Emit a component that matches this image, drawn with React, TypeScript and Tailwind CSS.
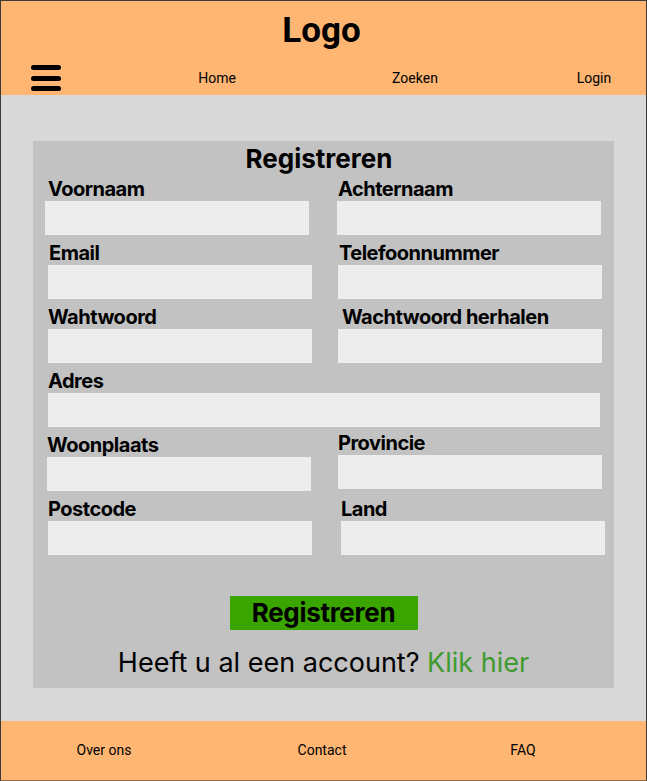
const fields: { label: string; span?: boolean; labelCls?: string; inputCls?: string }[] = [
    { label: "Voornaam", inputCls: "-ml-[3px]" },
    { label: "Achternaam", inputCls: "-ml-[1px]" },
    { label: "Email", labelCls: "ml-[1px]" },
    { label: "Telefoonnummer", labelCls: "ml-[1px]" },
    { label: "Wahtwoord" },
    { label: "Wachtwoord herhalen", labelCls: "ml-[4px]" },
    { label: "Adres", span: true },
    { label: "Woonplaats", labelCls: "-ml-[1px]", inputCls: "-ml-[1px]" },
    { label: "Provincie", labelCls: "-mt-[2px]", inputCls: "-mb-[2px]" },
    { label: "Postcode" },
    { label: "Land", labelCls: "ml-[3px]", inputCls: "ml-[3px]" },
];

function Field({ label, span, labelCls, inputCls }: { label: string; span?: boolean; labelCls?: string; inputCls?: string }) {
    return (
        <div className={span ? "col-span-2 flex flex-col" : "flex flex-col"}>
            <label className={"h-[20px] text-[20px] leading-[20px] font-bold tracking-[-0.5px] text-black " + (labelCls || "")}>{label}</label>
            <input
                type="text"
                className={"mt-[2px] h-[34px] bg-[#EDEDED] outline-none " + (span ? "w-[552px] " : "w-[264px] ") + (inputCls || "")}
            />
        </div>
    );
}

export default function App() {
    return (
        <div className="flex h-[781px] w-[647px] flex-col border border-[#3a3a3a] border-b-[#8f6c4a] font-['Inter',sans-serif]">
            {/* Header */}
            <header className="flex h-[94px] flex-col bg-[#FFB672]">
                <h1 className="mt-[10px] pr-[4px] text-center font-['Roboto',sans-serif] text-[35px] leading-[40px] font-bold text-black">Logo</h1>
                <nav className="mt-[14px] flex h-[26px] items-center font-['Roboto',sans-serif] text-[14px] text-black">
                    <button className="ml-[30px] flex h-[26px] w-[30px] flex-col justify-between">
                        <span className="h-[5px] w-full rounded-full bg-black" />
                        <span className="h-[5px] w-full rounded-full bg-black" />
                        <span className="h-[5px] w-full rounded-full bg-black" />
                    </button>
                    <a className="ml-[106px] w-[100px] text-center">Home</a>
                    <a className="ml-[98px] w-[100px] text-center">Zoeken</a>
                    <a className="ml-[79px] w-[100px] text-center">Login</a>
                </nav>
            </header>

            {/* Main */}
            <main className="h-[626px] bg-[#D9D9D9] pt-[46px] pl-[32px]">
                <div className="flex h-[547px] w-[581px] flex-col bg-[#C2C2C2] pt-[3px]">
                    <h2 className="pr-[9px] text-center text-[26px] leading-[30px] font-bold text-black">Registreren</h2>
                    <div className="mt-[5px] grid grid-cols-[264px_264px] gap-x-[26px] gap-y-[8px] pl-[15px]">
                        {fields.map((f) => (
                            <Field key={f.label} {...f} />
                        ))}
                    </div>
                    <div className="mt-[41px] flex justify-center">
                        <button className="h-[34px] w-[188px] bg-[#3BA500] text-[26px] leading-[34px] font-bold tracking-[-0.3px] text-black">Registreren</button>
                    </div>
                    <p className="mt-[17px] text-center text-[27px] leading-[32px] text-black">
                        Heeft u al een account? <a className="text-[#3F9B30]">Klik hier</a>
                    </p>
                </div>
            </main>

            {/* Footer */}
            <footer className="flex h-[59px] items-center bg-[#FFB672] font-['Roboto',sans-serif] text-[14px] text-black">
                <a className="ml-[53px] w-[100px] text-center">Over ons</a>
                <a className="ml-[118px] w-[100px] text-center">Contact</a>
                <a className="ml-[101px] w-[100px] text-center">FAQ</a>
            </footer>
        </div>
    );
}
